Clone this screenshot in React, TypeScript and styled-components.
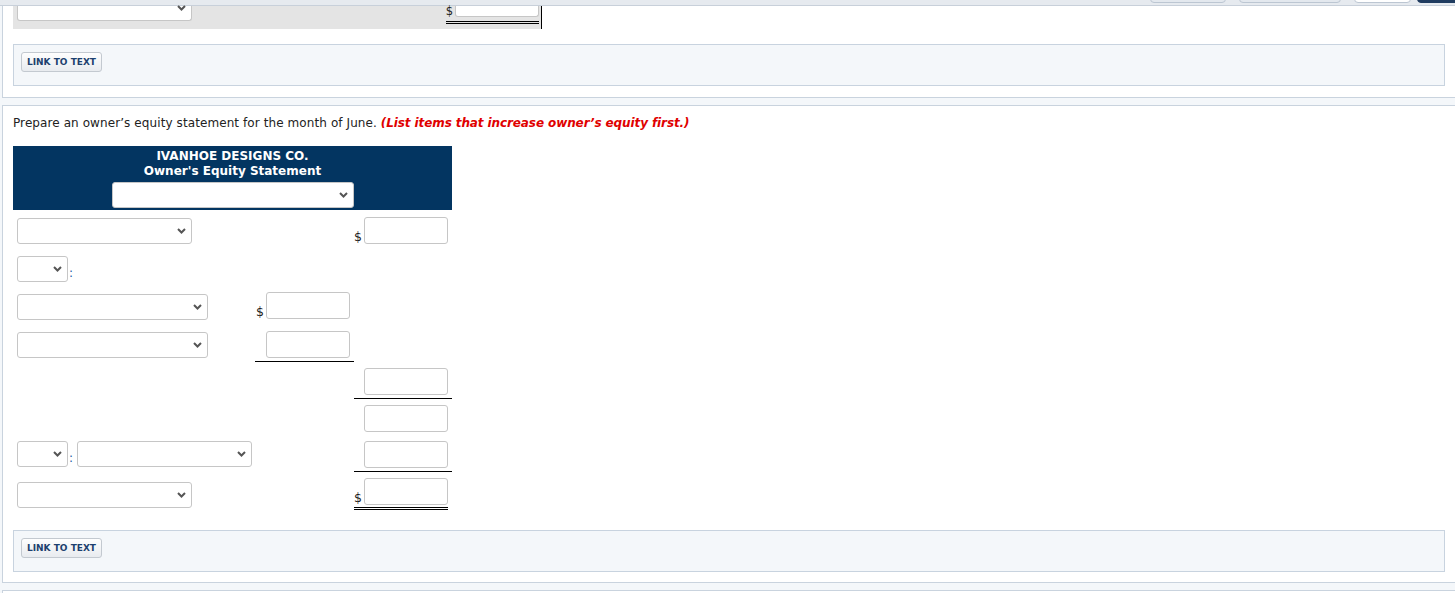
import React, { FC } from "react";
import styled, { createGlobalStyle } from "styled-components";

const GlobalStyle = createGlobalStyle`
  html, body {
    margin: 0;
    padding: 0;
    background: #f4f7fa;
    overflow: hidden;
  }
  body {
    font-family: "DejaVu Sans", Verdana, sans-serif;
    font-size: 12px;
    color: #222;
  }
`;

const TopBar = styled.div`
  height: 3px;
  background: #e6eaef;
  border-bottom: 1px solid #c8d0da;
  display: flex;
  justify-content: flex-end;
  align-items: flex-end;
  gap: 13px;
  padding-bottom: 2px;
  box-sizing: content-box;
  overflow: hidden;
`;

const TopButton = styled.div<{ $w: number; $tone: "soft" | "white" | "dark" }>`
  flex: none;
  width: ${p => p.$w}px;
  height: 12px;
  border-radius: 4px;
  box-sizing: border-box;
  background: ${p => (p.$tone === "dark" ? "#203c60" : p.$tone === "white" ? "#fff" : "#e3e8ee")};
  border: 1px solid ${p => (p.$tone === "dark" ? "#203c60" : "#bcc6d2")};
  &:last-child {
    margin-left: -7px;
    margin-right: -22px;
  }
`;

const Panel = styled.section<{ $cut?: boolean }>`
  margin: ${p => (p.$cut ? "0" : "7px")} 0 0 2px;
  width: 1454px;
  box-sizing: border-box;
  background: #fff;
  border: 1px solid #c9d3de;
  border-top: ${p => (p.$cut ? "none" : "1px solid #c9d3de")};
  padding: ${p => (p.$cut ? "0 10px 11px" : "9px 10px 10px")};
`;

const StubPanel = styled(Panel)`
  height: 40px;
`;

/* the row of the previous question, scrolled half out of view */
const ScrolledRow = styled.div`
  width: 522px;
  height: 23px;
  background: #e4e4e4;
  border-right: 1px solid #000;
  display: flex;
  justify-content: space-between;
  align-items: flex-start;
  padding: 0 2px 0 4px;
  box-sizing: content-box;
`;

const LinkBox = styled.div<{ $gap: number }>`
  margin-top: ${p => p.$gap}px;
  height: 42px;
  box-sizing: border-box;
  background: #f4f7fa;
  border: 1px solid #c8d3df;
  padding: 7px 7px;
`;

const LinkButton = styled.button`
  height: 20px;
  padding: 0 5px;
  border: 1px solid #c3c9d0;
  border-radius: 3px;
  background: linear-gradient(#fefefe, #e8ebef);
  color: #1d416f;
  font-family: "DejaVu Sans", Verdana, sans-serif;
  font-weight: bold;
  font-size: 9px;
  line-height: 18px;
  cursor: pointer;
`;

const Prompt = styled.p`
  margin: 0 0 15px;
  line-height: 16px;
  font-size: 12px;
  letter-spacing: 0.09px;
  color: #222;
`;

const Hint = styled.em`
  color: #e00000;
  font-weight: bold;
  letter-spacing: -0.1px;
`;

const Statement = styled.div`
  width: 439px;
`;

const StatementHeader = styled.div`
  height: 64px;
  box-sizing: border-box;
  background: #033561;
  color: #fff;
  padding: 3px 0 2px;
  display: flex;
  flex-direction: column;
  align-items: center;
  font-weight: bold;
  font-size: 12px;
  line-height: 15px;
`;

const SelectBox = styled.div<{ $w: number; $cut?: boolean }>`
  flex: none;
  width: ${p => p.$w}px;
  height: ${p => (p.$cut ? 15 : 26)}px;
  box-sizing: border-box;
  background: #fff;
  border: 1px solid #c6c6c6;
  border-top: ${p => (p.$cut ? "none" : "1px solid #c6c6c6")};
  border-radius: ${p => (p.$cut ? "0 0 3px 3px" : "3px")};
  display: flex;
  align-items: ${p => (p.$cut ? "flex-start" : "center")};
  justify-content: flex-end;
  padding-right: 5px;
  svg {
    margin-top: ${p => (p.$cut ? -1 : 0)}px;
  }
`;

const HeaderSelect = styled(SelectBox)`
  margin-top: 3px;
`;

const Chevron: FC = () => (
  <svg width="9" height="6" viewBox="0 0 9 6">
    <polyline points="1,1 4.5,4.5 8,1" fill="none" stroke="#555" strokeWidth="2" />
  </svg>
);

const Select: FC<{ w: number; cut?: boolean }> = ({ w, cut }) => (
  <SelectBox $w={w} $cut={cut}>
    <Chevron />
  </SelectBox>
);

const Field = styled.input<{ $cut?: boolean }>`
  flex: none;
  width: 84px;
  height: ${p => (p.$cut ? 11 : 27)}px;
  margin: 0;
  box-sizing: border-box;
  border: 1px solid #c6c6c6;
  border-top: ${p => (p.$cut ? "none" : "1px solid #c6c6c6")};
  border-radius: ${p => (p.$cut ? "0 0 3px 3px" : "3px")};
  background: #fff;
  padding: 0 4px;
  outline: none;
`;

const Dollar = styled.span`
  font-size: 12.5px;
  line-height: 12px;
  color: #222;
  margin-right: 2px;
  padding-bottom: 1px;
`;

const TopDollar = styled(Dollar)`
  font-size: 11.5px;
  line-height: 11px;
  padding-bottom: 0;
`;

const Colon = styled.span`
  font-size: 12px;
  line-height: 12px;
  color: #1d5fa6;
  margin: 0 4px 0 1px;
  padding-bottom: 3px;
`;

const Row = styled.div<{ $h: number }>`
  display: grid;
  grid-template-columns: 242px 99px 98px;
  height: ${p => p.$h}px;
`;

const LabelCell = styled.div<{ $pb?: number }>`
  display: flex;
  align-items: flex-end;
  padding: 0 0 ${p => p.$pb ?? 4}px 4px;
`;

const AmountCell = styled.div<{ $rule?: boolean }>`
  display: flex;
  align-items: flex-end;
  justify-content: flex-end;
  padding: 0 4px 3px 0;
  border-bottom: 1px solid ${p => (p.$rule ? "#000" : "transparent")};
`;

const TotalCell = styled(AmountCell)<{ $double?: boolean }>`
  padding-bottom: ${p => (p.$double ? 0 : 3)}px;
  border-bottom: ${p => (p.$double ? "none" : `1px solid ${p.$rule ? "#000" : "transparent"}`)};
`;

const DoubleRule = styled.div<{ $pad?: number }>`
  display: flex;
  align-items: flex-end;
  padding-bottom: ${p => p.$pad ?? 2}px;
  border-bottom: 3px double #000;
`;

const Amount: FC<{ dollar?: boolean }> = ({ dollar }) => (
  <>
    {dollar && <Dollar>$</Dollar>}
    <Field readOnly />
  </>
);

export default function App() {
  return (
    <>
      <GlobalStyle />
      <TopBar>
        <TopButton $w={76} $tone="soft" />
        <TopButton $w={102} $tone="soft" />
        <TopButton $w={57} $tone="white" />
        <TopButton $w={60} $tone="dark" />
      </TopBar>

      <Panel $cut>
        <ScrolledRow>
          <Select w={175} cut />
          <DoubleRule $pad={4}>
            <TopDollar>$</TopDollar>
            <Field readOnly $cut />
          </DoubleRule>
        </ScrolledRow>
        <LinkBox $gap={15}>
          <LinkButton>LINK TO TEXT</LinkButton>
        </LinkBox>
      </Panel>

      <Panel>
        <Prompt>
          Prepare an owner’s equity statement for the month of June.{" "}
          <Hint>(List items that increase owner’s equity first.)</Hint>
        </Prompt>
        <Statement>
          <StatementHeader>
            <div>IVANHOE DESIGNS CO.</div>
            <div>Owner's Equity Statement</div>
            <HeaderSelect $w={242}>
              <Chevron />
            </HeaderSelect>
          </StatementHeader>

          <Row $h={38}>
            <LabelCell>
              <Select w={175} />
            </LabelCell>
            <AmountCell />
            <TotalCell>
              <Amount dollar />
            </TotalCell>
          </Row>

          <Row $h={38}>
            <LabelCell>
              <Select w={51} />
              <Colon>:</Colon>
            </LabelCell>
            <AmountCell />
            <TotalCell />
          </Row>

          <Row $h={37}>
            <LabelCell $pb={3}>
              <Select w={191} />
            </LabelCell>
            <AmountCell>
              <Amount dollar />
            </AmountCell>
            <TotalCell />
          </Row>

          <Row $h={39}>
            <LabelCell>
              <Select w={191} />
            </LabelCell>
            <AmountCell $rule>
              <Amount />
            </AmountCell>
            <TotalCell />
          </Row>

          <Row $h={37}>
            <LabelCell />
            <AmountCell />
            <TotalCell $rule>
              <Amount />
            </TotalCell>
          </Row>

          <Row $h={37}>
            <LabelCell />
            <AmountCell />
            <TotalCell>
              <Amount />
            </TotalCell>
          </Row>

          <Row $h={36}>
            <LabelCell $pb={5}>
              <Select w={51} />
              <Colon>:</Colon>
              <Select w={175} />
            </LabelCell>
            <AmountCell />
            <TotalCell $rule>
              <Amount />
            </TotalCell>
          </Row>

          <Row $h={38}>
            <LabelCell $pb={2}>
              <Select w={175} />
            </LabelCell>
            <AmountCell />
            <TotalCell $double>
              <DoubleRule>
                <Amount dollar />
              </DoubleRule>
            </TotalCell>
          </Row>
        </Statement>
        <LinkBox $gap={20}>
          <LinkButton>LINK TO TEXT</LinkButton>
        </LinkBox>
      </Panel>

      <StubPanel />
    </>
  );
}
